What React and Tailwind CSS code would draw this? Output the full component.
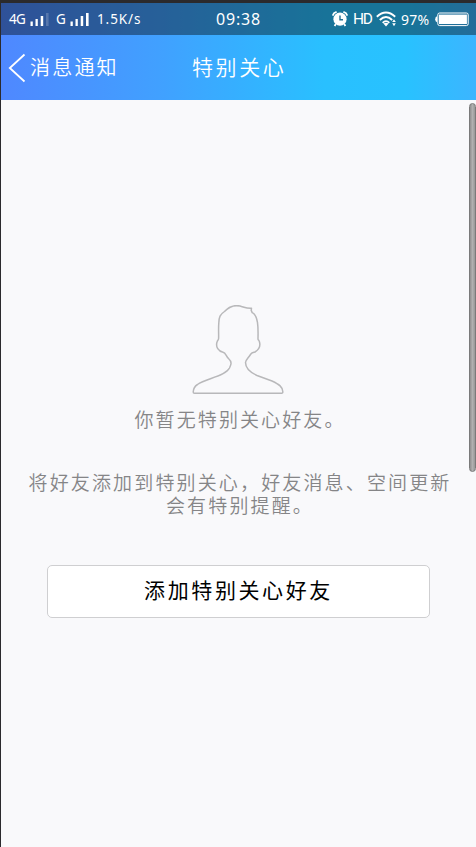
import React from 'react';

function SignalBars({ faded }) {
  return (
    <svg viewBox="0 0 20 16" className="h-4 w-5 shrink-0" fill="#fff">
      <rect x="0.5" y="10.5" width="2.3" height="4.5" />
      <rect x="5.5" y="8" width="2.3" height="7" />
      <rect x="10.7" y="5" width="2.5" height="10" />
      <rect x="16" y="2" width="2.6" height="13" opacity={faded ? 0.2 : 1} />
    </svg>
  );
}

function AlarmIcon() {
  return (
    <svg viewBox="0 0 16 16" className="h-4 w-4 shrink-0" fill="none">
      <circle cx="8" cy="8.2" r="6.6" fill="#fff" />
      <path d="M1 4 Q1.6 1.8 4 1.2 M15 4 Q14.4 1.8 12 1.2" stroke="#fff" strokeWidth="1.8" strokeLinecap="round" />
      <path d="M3.8 13 L2.6 15 M12.2 13 L13.4 15" stroke="#fff" strokeWidth="1.8" />
      <path d="M8 4.4 V8.7 H11" stroke="#247092" strokeWidth="1.4" />
    </svg>
  );
}

function WifiIcon() {
  return (
    <svg viewBox="0 0 21 16" className="h-4 w-[21px] shrink-0" fill="none" stroke="#fff" strokeWidth="1.9">
      <path d="M.8 5.7 Q10 -2.5 19.2 5.7" />
      <path d="M3.8 9 Q10 3.2 16.2 9" />
      <path d="M6.7 11.8 Q10 8.4 13.3 11.8" />
      <path d="M7.4 12.6 Q10 10.8 12.6 12.6 L10 15.4 Z" fill="#fff" stroke="none" />
      <path d="M16.2 11 L18 8.2 L19.8 11 Z M16.2 12.3 L18 15.2 L19.8 12.3 Z" fill="#fff" stroke="none" />
    </svg>
  );
}

function BatteryIcon() {
  return (
    <svg viewBox="0 0 34 15" className="h-[15px] w-[34px] shrink-0" fill="none">
      <rect x="2.8" y="1" width="30.4" height="12.6" rx="1.8" stroke="#fff" strokeWidth="1" />
      <rect x="4" y="2.6" width="27.9" height="9.4" fill="#fff" />
      <path d="M2 4.3 Q.2 5 .2 7.3 Q.2 9.6 2 10.3 Z" fill="#fff" />
    </svg>
  );
}

function StatusBar() {
  return (
    <div className="relative flex h-8 items-center bg-black/40 pl-2 pr-[7px] font-['Noto_Sans','Open_Sans',sans-serif] text-white">
      <span className="w-[21px] text-[13.5px] tracking-[-0.6px]">4G</span>
      <SignalBars faded />
      <span className="ml-[6px] w-[14px] text-[13.5px]">G</span>
      <SignalBars />
      <span className="ml-[7px] text-[13.5px] tracking-[0.9px]">1.5K/s</span>
      <span className="absolute left-[215px] text-[16px] tracking-[0.8px]">09:38</span>
      <div className="ml-auto flex items-center">
        <AlarmIcon />
        <span className="ml-[5px] w-[23px] pt-[2px] font-['Roboto',sans-serif] text-[15.5px] tracking-[-1.2px]">HD</span>
        <WifiIcon />
        <span className="ml-[4px] w-[34px] text-[14px] tracking-[0.3px]">97%</span>
        <BatteryIcon />
      </div>
    </div>
  );
}

function NavBar() {
  return (
    <div className="relative flex h-[65px] items-center text-white">
      <button className="flex items-center pl-[7px]">
        <svg viewBox="0 0 18 30" className="h-[30px] w-[18px]" fill="none" stroke="#fff" strokeWidth="1.8">
          <path d="M16.5 1.5 L1.8 15 L16.5 28.5" />
        </svg>
        <span className="ml-[4px] text-[20px] font-[350] leading-none tracking-[2.2px]">消息通知</span>
      </button>
      <h1 className="absolute left-[191px] pb-px text-[21px] font-[350] leading-none tracking-[2.6px]">特别关心</h1>
    </div>
  );
}

function PersonOutline() {
  return (
    <svg viewBox="0 0 94 92" className="mr-[2px] h-[92px] w-[94px]" fill="none" stroke="#b8b8ba" strokeWidth="1.5" strokeLinejoin="round">
      <path d="M3.5 88.3 H90.5 Q92 88.3 91.8 86.5 C91.5 82 88.5 79.5 81 76 L66 70.5 C58.5 67 54.5 63 54.5 57.5 C54.5 55 57 53.2 59.5 49.5 C61 47.3 61.5 48 64 47 C68 44.5 70 41 68.2 36 C67.8 34.8 66.8 35.5 67 33.5 C67.3 22 67.2 10.5 61.2 7.6 L60.2 5.4 L60.5 3.2 C56 3.6 53.5 2.2 49 1 C43 -.2 38 1.5 33.5 6.5 C29 9.5 28 12 27.8 18 C27.3 24 27.8 28.5 27.6 33.5 C27.5 35.2 26.5 35 26 37 C24.5 42 27.5 46.5 32 47.2 C35 48 34.5 50.5 37.5 53.5 C41.3 57 40.2 59.5 38.5 63 C34 71.5 15 73.5 6.5 79.5 C3 81.8 2.3 84.5 2.2 87 Q2.2 88.3 3.5 88.3 Z" />
    </svg>
  );
}

export default function App() {
  return (
    <div className="flex h-[847px] w-[476px] flex-col overflow-hidden border-l border-t-[3px] border-[#2b2a2d] bg-[#f9f9fb] font-['Liberation_Sans','Noto_Sans_CJK_SC',sans-serif]">
      <header className="h-[97px] shrink-0 bg-[linear-gradient(90deg,#4f88ff_0%,#41a0ff_33%,#29c0ff_68%,#28c2ff_85%,#3cb5ff_100%)]">
        <StatusBar />
        <NavBar />
      </header>

      <main className="relative flex flex-1 flex-col items-center pt-[205px] text-[#858587]">
        <PersonOutline />
        <p className="mt-[12px] pl-[3px] text-[19px] font-[350] leading-[23px] tracking-[2.1px]">你暂无特别关心好友。</p>
        <div className="mt-[40px] flex flex-col items-center whitespace-nowrap pl-[3px] text-[19px] font-[350] leading-[23px] tracking-[2.15px]">
          <p>将好友添加到特别关心，好友消息、空间更新</p>
          <p>会有特别提醒。</p>
        </div>
        <button className="mt-[47px] mr-px h-[53px] w-[383px] rounded-[5px] border border-[#cfcfd1] bg-white pb-[3px] pl-px text-[21px] leading-none tracking-[2.6px] text-black">
          添加特别关心好友
        </button>

        {/* scroll thumb */}
        <div className="absolute right-0 top-[3px] h-[369px] w-[7px] rounded-full border border-[#7a7a7a] bg-[linear-gradient(90deg,#8f8f8f,#b0b0b0,#979797)]" />
      </main>
    </div>
  );
}
